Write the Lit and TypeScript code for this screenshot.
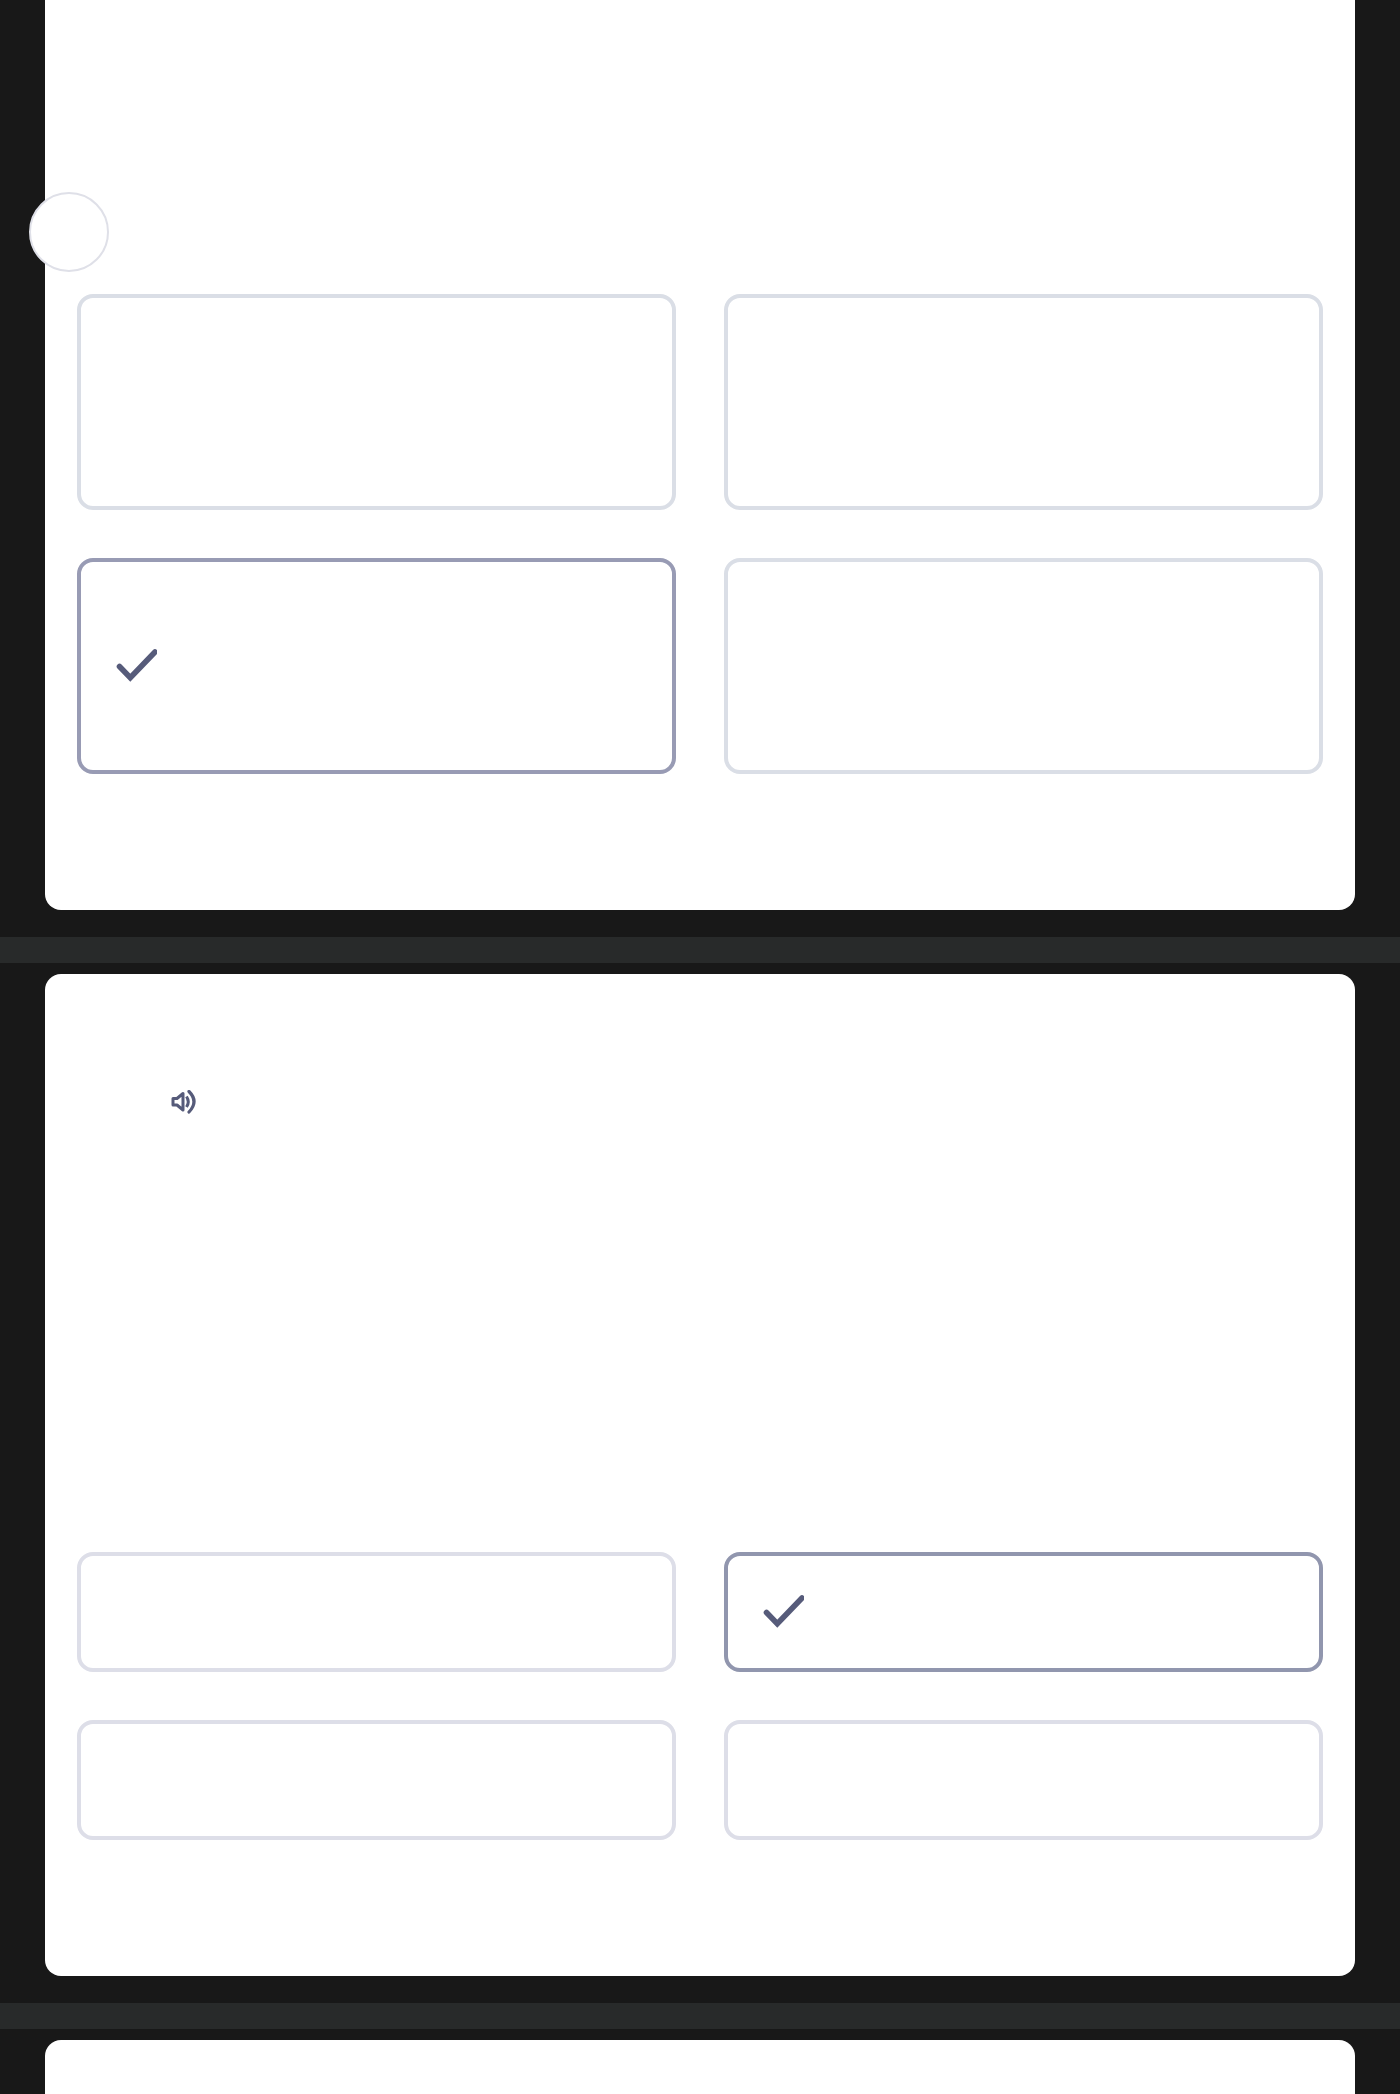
import { LitElement, html, css } from "lit";
import { customElement, property } from "lit/decorators.js";

@customElement("quiz-option")
class QuizOption extends LitElement {
  @property({ type: Boolean }) selected = false;
  static styles = css`
    :host { display: block; }
    .box {
      box-sizing: border-box;
      height: 100%;
      display: flex;
      align-items: center;
      padding: 0 34px;
      border: 4px solid var(--option-border, #dcdfe7);
      border-radius: 16px;
      background: #fff;
    }
    .box.on { border-color: var(--option-selected, #9396b0); }
    svg { display: block; width: 42px; height: 34px; stroke: #565b7a; fill: none; }
  `;
  render() {
    return html`<div class="box ${this.selected ? "on" : ""}">
      ${this.selected
        ? html`<svg viewBox="0 0 42 34"><path d="M4.5 17.5 L15.3 28.8 L40 3" stroke-width="5.6" stroke-linecap="round"/></svg>`
        : ""}
    </div>`;
  }
}

@customElement("app-root")
export class AppRoot extends LitElement {
  static styles = css`
    :host {
      display: block;
      height: 2094px;
      overflow: hidden;
      background: #181818;
    }
    .card {
      position: relative;
      box-sizing: border-box;
      margin: 0 45px;
      padding: 0 32px 136px;
      background: #fff;
      border-radius: 16px;
    }
    .first {
      padding-top: 294px;
      border-radius: 0 0 16px 16px;
      --option-border: #dadee6;
      --option-selected: #989bb4;
    }
    .second {
      padding-top: 578px;
      --option-border: #dddee8;
      --option-selected: #9196ae;
    }
    .third { height: 200px; }
    .grid { display: grid; grid-template-columns: 1fr 1fr; gap: 48px; }
    .tall { grid-auto-rows: 216px; }
    .short { grid-auto-rows: 120px; }
    .band { height: 26px; margin: 27px 0 11px; background: #282a2a; }
    .avatar {
      position: absolute;
      left: -16px;
      top: 192px;
      box-sizing: border-box;
      width: 80px;
      height: 80px;
      border: 2px solid #dfe0e8;
      border-radius: 50%;
      background: #fff;
    }
    .sound {
      position: absolute;
      left: 125px;
      top: 116px;
      width: 28px;
      height: 28px;
      stroke: #565b7a;
      fill: none;
    }
  `;
  render() {
    return html`
      <section class="card first">
        <div class="avatar"></div>
        <div class="grid tall">
          <quiz-option></quiz-option>
          <quiz-option></quiz-option>
          <quiz-option selected></quiz-option>
          <quiz-option></quiz-option>
        </div>
      </section>
      <div class="band"></div>
      <section class="card second">
        <svg class="sound" viewBox="0 0 28 28">
          <path d="M3 8.5 H7 L13 3.5 V20 L7 15 H3 Z" stroke-width="3" stroke-linejoin="round"/>
          <path d="M16.5 6.5 Q20 11.8 16.5 17" stroke-width="3"/>
          <path d="M19 1.5 Q29 11.5 19 22" stroke-width="3.2" stroke-linecap="round"/>
        </svg>
        <div class="grid short">
          <quiz-option></quiz-option>
          <quiz-option selected></quiz-option>
          <quiz-option></quiz-option>
          <quiz-option></quiz-option>
        </div>
      </section>
      <div class="band"></div>
      <section class="card third"></section>
    `;
  }
}
